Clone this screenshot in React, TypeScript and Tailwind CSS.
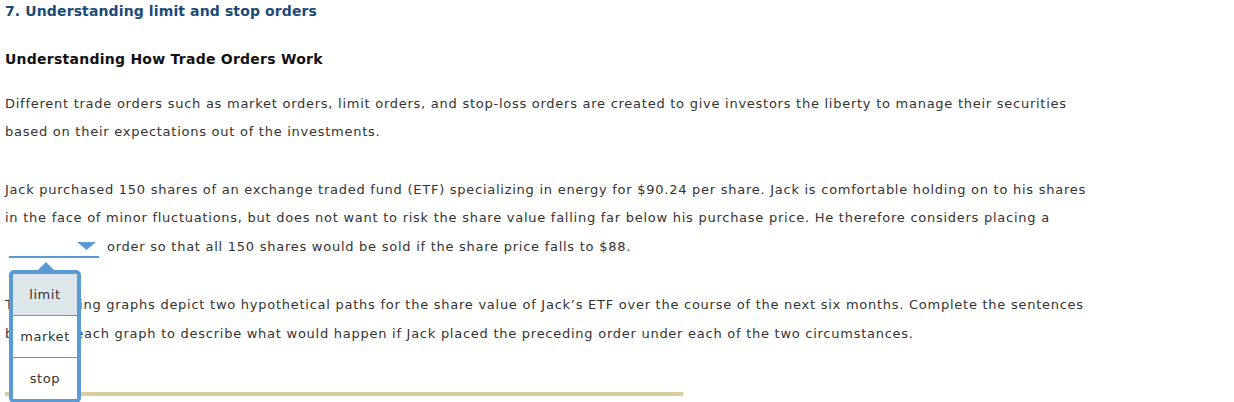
import { useState } from 'react';

const options = ['limit', 'market', 'stop'];

export default function App() {
  const [picked, setPicked] = useState<string | null>(null);
  const [open, setOpen] = useState(true);

  return (
    <div className="relative min-h-[402px] bg-white px-[5px] text-[13px] leading-[28px] tracking-[0.74px] text-[#333333] font-['Verdana','DejaVu_Sans',sans-serif]">
      <h1 className="text-[14px] font-bold leading-[22px] tracking-[0.12px] text-[#1b4a78]">7. Understanding limit and stop orders</h1>

      <h2 className="mt-[26px] text-[14px] font-bold leading-[22px] tracking-[0.25px] text-[#111111]">Understanding How Trade Orders Work</h2>

      <p className="mt-[20px]">
        Different trade orders such as market orders, limit orders, and stop-loss orders are created to give investors the liberty to manage their securities
        <br />
        based on their expectations out of the investments.
      </p>

      <p className="mt-[30px]">
        Jack purchased 150 shares of an exchange traded fund (ETF) specializing in energy for $90.24 per share. Jack is comfortable holding on to his shares
        <br />
        in the face of minor fluctuations, but does not want to risk the share value falling far below his purchase price. He therefore considers placing a
        <br />
        <span className="relative inline-block align-baseline pt-[1px]">
          <button
            onClick={() => setOpen(!open)}
            className="ml-[4px] mr-[8px] inline-flex h-[20px] w-[90px] items-end justify-end border-b-2 border-[#5b9bd3] pr-[3px] pb-[5px] align-baseline"
          >
            <span className="mr-[1px]">{picked ?? ''}</span>
            <svg width="19" height="8" viewBox="0 0 19 8" className="mb-[1px]">
              <path d="M0 0 H19 L9.5 8 Z" fill="#5b9bd3" />
            </svg>
          </button>
          {open && (
            <div className="absolute left-[4px] top-[38px] z-10 w-[72px] tracking-normal">
              <svg width="16" height="8" viewBox="0 0 16 8" className="absolute left-[29px] -top-[8px]">
                <path d="M0 8 L8 0 L16 8 Z" fill="#5b9bd3" />
              </svg>
              <ul className="overflow-hidden rounded-[5px] border-4 border-[#5b9bd3] bg-white leading-[41px] tracking-[0.6px]">
                {options.map((o, i) => (
                  <li
                    key={o}
                    onClick={() => {
                      setPicked(o);
                      setOpen(false);
                    }}
                    className={
                      'cursor-pointer text-center ' +
                      (i > 0 ? 'border-t border-[#5b9bd3] ' : '') +
                      (i === 0 ? 'bg-[#dde6ea]' : 'bg-white')
                    }
                  >
                    {o}
                  </li>
                ))}
              </ul>
            </div>
          )}
        </span>
        order so that all 150 shares would be sold if the share price falls to $88.
      </p>

      <p className="mt-[29px] leading-[29px]">
        The following graphs depict two hypothetical paths for the share value of Jack’s ETF over the course of the next six months. Complete the sentences
        <br />
        based on each graph to describe what would happen if Jack placed the preceding order under each of the two circumstances.
      </p>

      <div className="mt-[44px] h-[4px] w-[678px] bg-[#dacd9f]" />
    </div>
  );
}
